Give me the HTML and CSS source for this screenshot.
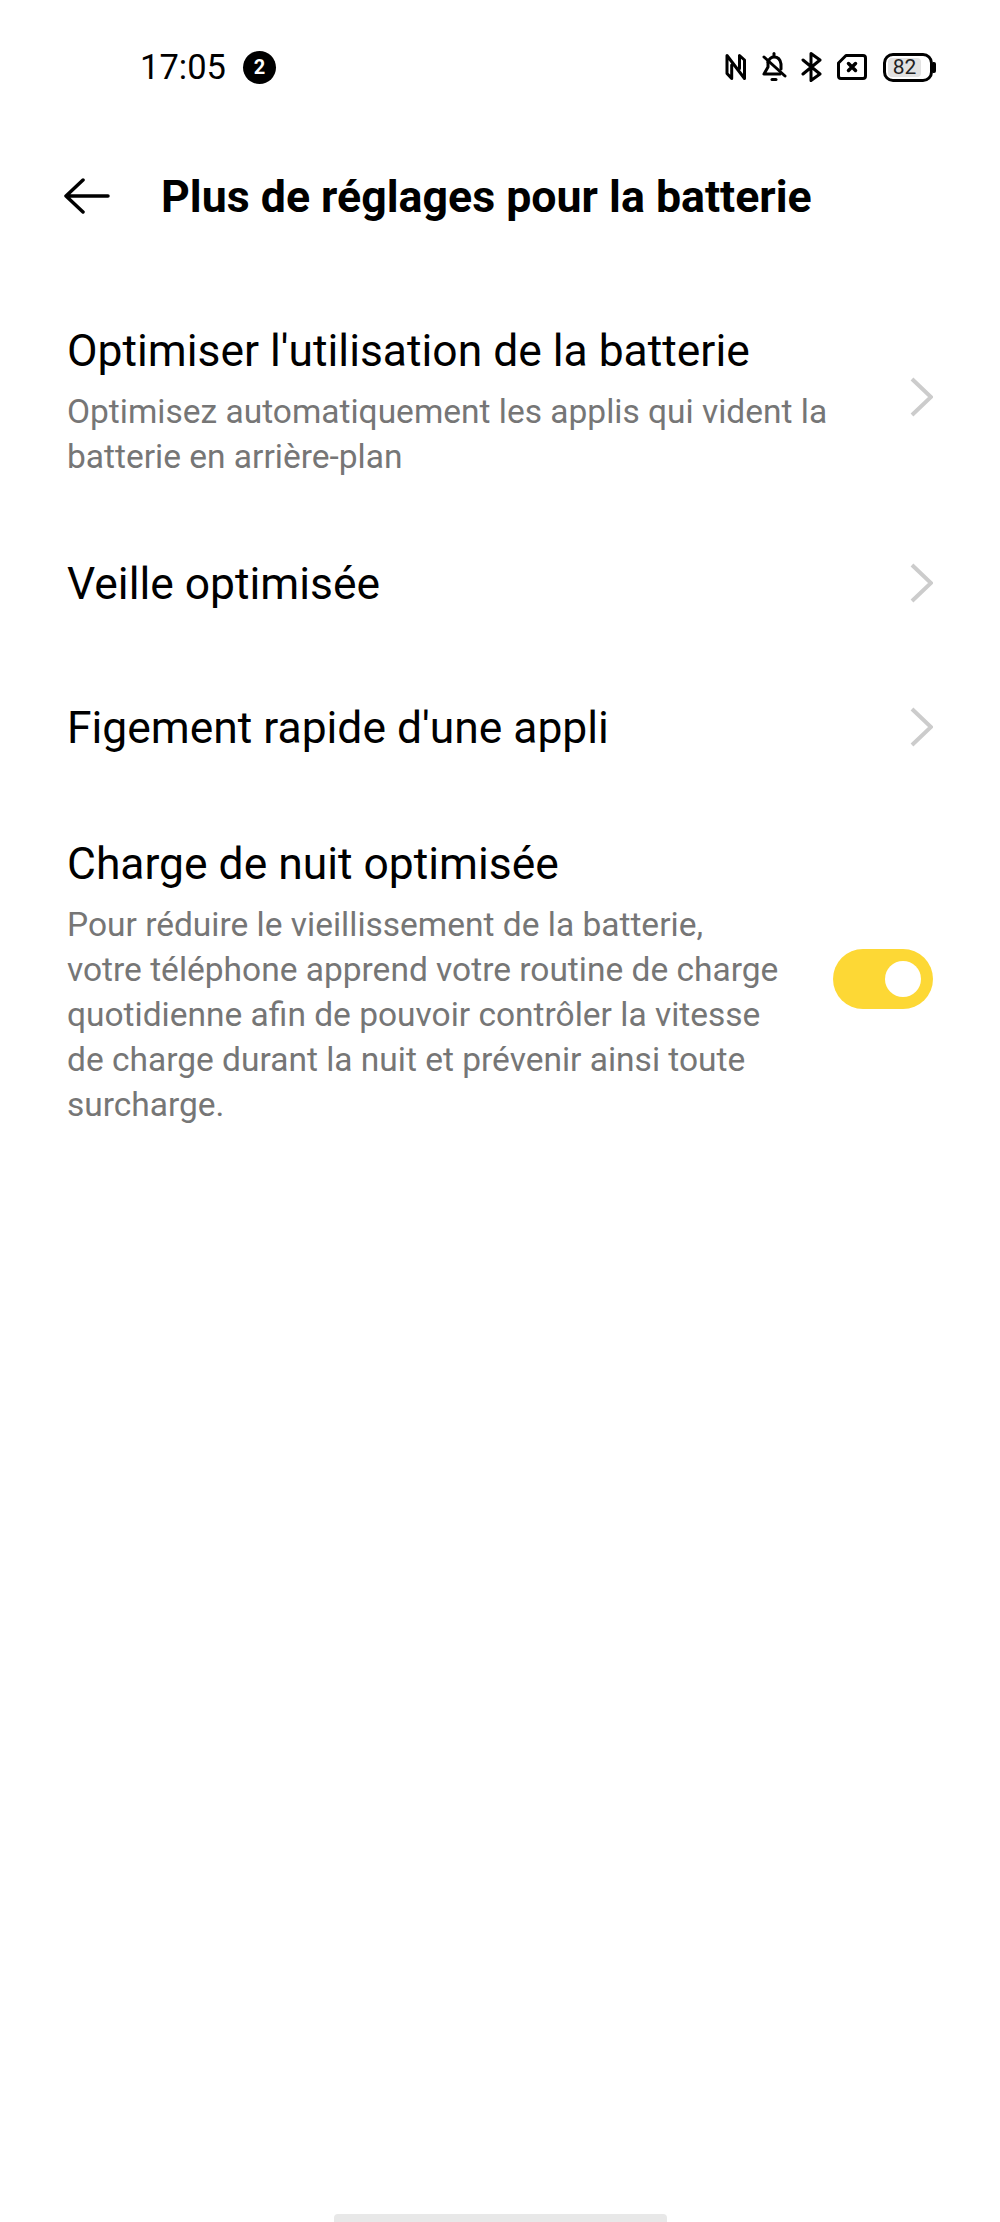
FILE: index.html
```html
<!DOCTYPE html>
<html lang="fr">
<head>
  <meta charset="UTF-8" />
  <meta name="viewport" content="width=device-width, initial-scale=1.0"/>
  <title>Plus de réglages pour la batterie</title>
  <link rel="stylesheet" href="styles.css">
</head>
<body>
  <div class="status">
    <span class="time">17:05</span>
    <span class="badge">2</span>
    <div class="status-icons">
      <svg width="22" height="28" viewBox="0 0 22 28" fill="none" stroke="#000" stroke-width="3" stroke-linejoin="round" stroke-linecap="round">
        <path d="M6.700 12 V25.500 L2 20.500 V2.500 L19.500 25.500 V7 L14.500 2.500 V15.500"/>
      </svg>
      <svg width="26" height="30" viewBox="0 0 26 30" fill="none" stroke="#000" stroke-width="3" stroke-linejoin="round" stroke-linecap="round">
        <path d="M13 1.500 V4"/>
        <path d="M7 10 Q9 5 13 5 Q19 5 20 12 V17"/>
        <path d="M7 10 V15 L3 22 H19"/>
        <path d="M3 5 L24 24"/>
        <path d="M11 27.500 H15"/>
      </svg>
      <svg width="22" height="30" viewBox="0 0 22 30" fill="none" stroke="#000" stroke-width="3" stroke-linejoin="round" stroke-linecap="round">
        <path d="M2 8 L19 22 L10 28.500 V1.500 L19 8 L2 22"/>
      </svg>
      <svg width="30" height="26" viewBox="0 0 30 26" fill="none" stroke="#000" stroke-linejoin="round" stroke-linecap="round">
        <path stroke-width="3" d="M9 1.500 H26 Q28.500 1.500 28.500 4 V22 Q28.500 24.500 26 24.500 H4 Q1.500 24.500 1.500 22 V9 Z"/>
        <path stroke-width="3.500" d="M11.500 9.500 L18.500 16.500 M18.500 9.500 L11.500 16.500"/>
      </svg>
      <div class="battery">
        <div class="battery-body"><span class="battery-level">82</span></div>
        <div class="battery-tip"></div>
      </div>
    </div>
  </div>

  <div class="header">
    <svg class="back" width="46" height="36" viewBox="0 0 46 36" fill="none" stroke="#000" stroke-width="3.500" stroke-linecap="round" stroke-linejoin="round">
      <path d="M2 18 H44 M19 2 L2 18 L19 34"/>
    </svg>
    <h1>Plus de réglages pour la batterie</h1>
  </div>

  <div class="list">
    <div class="row row-first">
      <div class="row-text">
        <div class="row-title">Optimiser l'utilisation de la batterie</div>
        <div class="row-sub">Optimisez automatiquement les applis qui vident la batterie en arrière-plan</div>
      </div>
      <svg class="chevron" width="23" height="40" viewBox="0 0 23 40" fill="none" stroke="#cccccc" stroke-width="4"><path d="M2 2 L21 20 L2 38"/></svg>
    </div>
    <div class="row row-veille">
      <div class="row-title">Veille optimisée</div>
      <svg class="chevron" width="23" height="40" viewBox="0 0 23 40" fill="none" stroke="#cccccc" stroke-width="4"><path d="M2 2 L21 20 L2 38"/></svg>
    </div>
    <div class="row row-figement">
      <div class="row-title">Figement rapide d'une appli</div>
      <svg class="chevron" width="23" height="40" viewBox="0 0 23 40" fill="none" stroke="#cccccc" stroke-width="4"><path d="M2 2 L21 20 L2 38"/></svg>
    </div>
    <div class="row row-last">
      <div class="row-text narrow">
        <div class="row-title">Charge de nuit optimisée</div>
        <div class="row-sub">Pour réduire le vieillissement de la batterie,<br>votre téléphone apprend votre routine de charge quotidienne afin de pouvoir contrôler la vitesse de charge durant la nuit et prévenir ainsi toute surcharge.</div>
      </div>
      <div class="toggle"><div class="knob"></div></div>
    </div>
  </div>

  <div class="home-bar"></div>
</body>
</html>
```

FILE: styles.css
```css
html, body {
  margin: 0;
  padding: 0;
}
body {
  width: 1000px;
  height: 2222px;
  background: #fff;
  color: #000;
  font-family: Roboto, "Liberation Sans", sans-serif;
  display: flex;
  flex-direction: column;
  overflow: hidden;
}
.status {
  display: flex;
  align-items: center;
  height: 50px;
  margin-top: 42px;
  padding: 0 64px 0 140px;
}
.time {
  font-size: 34.500px;
  line-height: 50px;
}
.badge {
  width: 33px;
  height: 33px;
  margin-left: 17px;
  border-radius: 50%;
  background: #000;
  color: #fff;
  font-size: 20px;
  font-weight: 700;
  line-height: 33px;
  text-align: center;
}
.status-icons {
  display: flex;
  align-items: center;
  gap: 14px;
  margin-left: auto;
}
.battery {
  display: flex;
  align-items: center;
  margin-left: 2px;
}
.battery-body {
  box-sizing: border-box;
  width: 50px;
  height: 29px;
  padding: 2px;
  border: 3px solid #000;
  border-radius: 10px;
}
.battery-level {
  display: block;
  width: 33px;
  height: 19px;
  background: #e2e2e2;
  border-radius: 4px;
  color: #222;
  font-size: 21px;
  line-height: 19px;
  text-align: center;
}
.battery-tip {
  width: 3px;
  height: 11px;
  background: #000;
  border-radius: 0 2px 2px 0;
}
.header {
  display: flex;
  align-items: center;
  margin-top: 78px;
  padding-left: 64px;
  height: 52px;
}
h1 {
  margin: 2px 0 0 51px;
  font-size: 44.700px;
  font-weight: 700;
  line-height: 54px;
}
.list {
  margin-top: 101px;
  padding: 0 67px;
}
.row {
  display: flex;
  align-items: center;
  justify-content: space-between;
}
.row-title {
  font-size: 44.400px;
  line-height: 56px;
}
.row-sub {
  margin-top: 10px;
  color: #767676;
  font-size: 33.500px;
  line-height: 45px;
}
.row-first .row-text {
  width: 790px;
}
.narrow {
  width: 716px;
}
.row-veille {
  height: 56px;
  margin-top: 77px;
}
.row-figement {
  height: 56px;
  margin-top: 88px;
}
.row-last {
  margin-top: 80px;
}
.chevron {
  flex: none;
  margin-bottom: 2px;
}
.row-first .chevron {
  margin-bottom: 8px;
}
.toggle {
  display: flex;
  align-items: center;
  justify-content: flex-end;
  box-sizing: border-box;
  width: 100px;
  height: 60px;
  padding-right: 12px;
  margin-bottom: 6px;
  border-radius: 30px;
  background: #fdd835;
}
.knob {
  width: 36px;
  height: 36px;
  border-radius: 50%;
  background: #fff;
}
.home-bar {
  width: 333px;
  height: 8px;
  margin: auto auto 0;
  border-radius: 4px 4px 0 0;
  background: #e8e8e8;
}
```
